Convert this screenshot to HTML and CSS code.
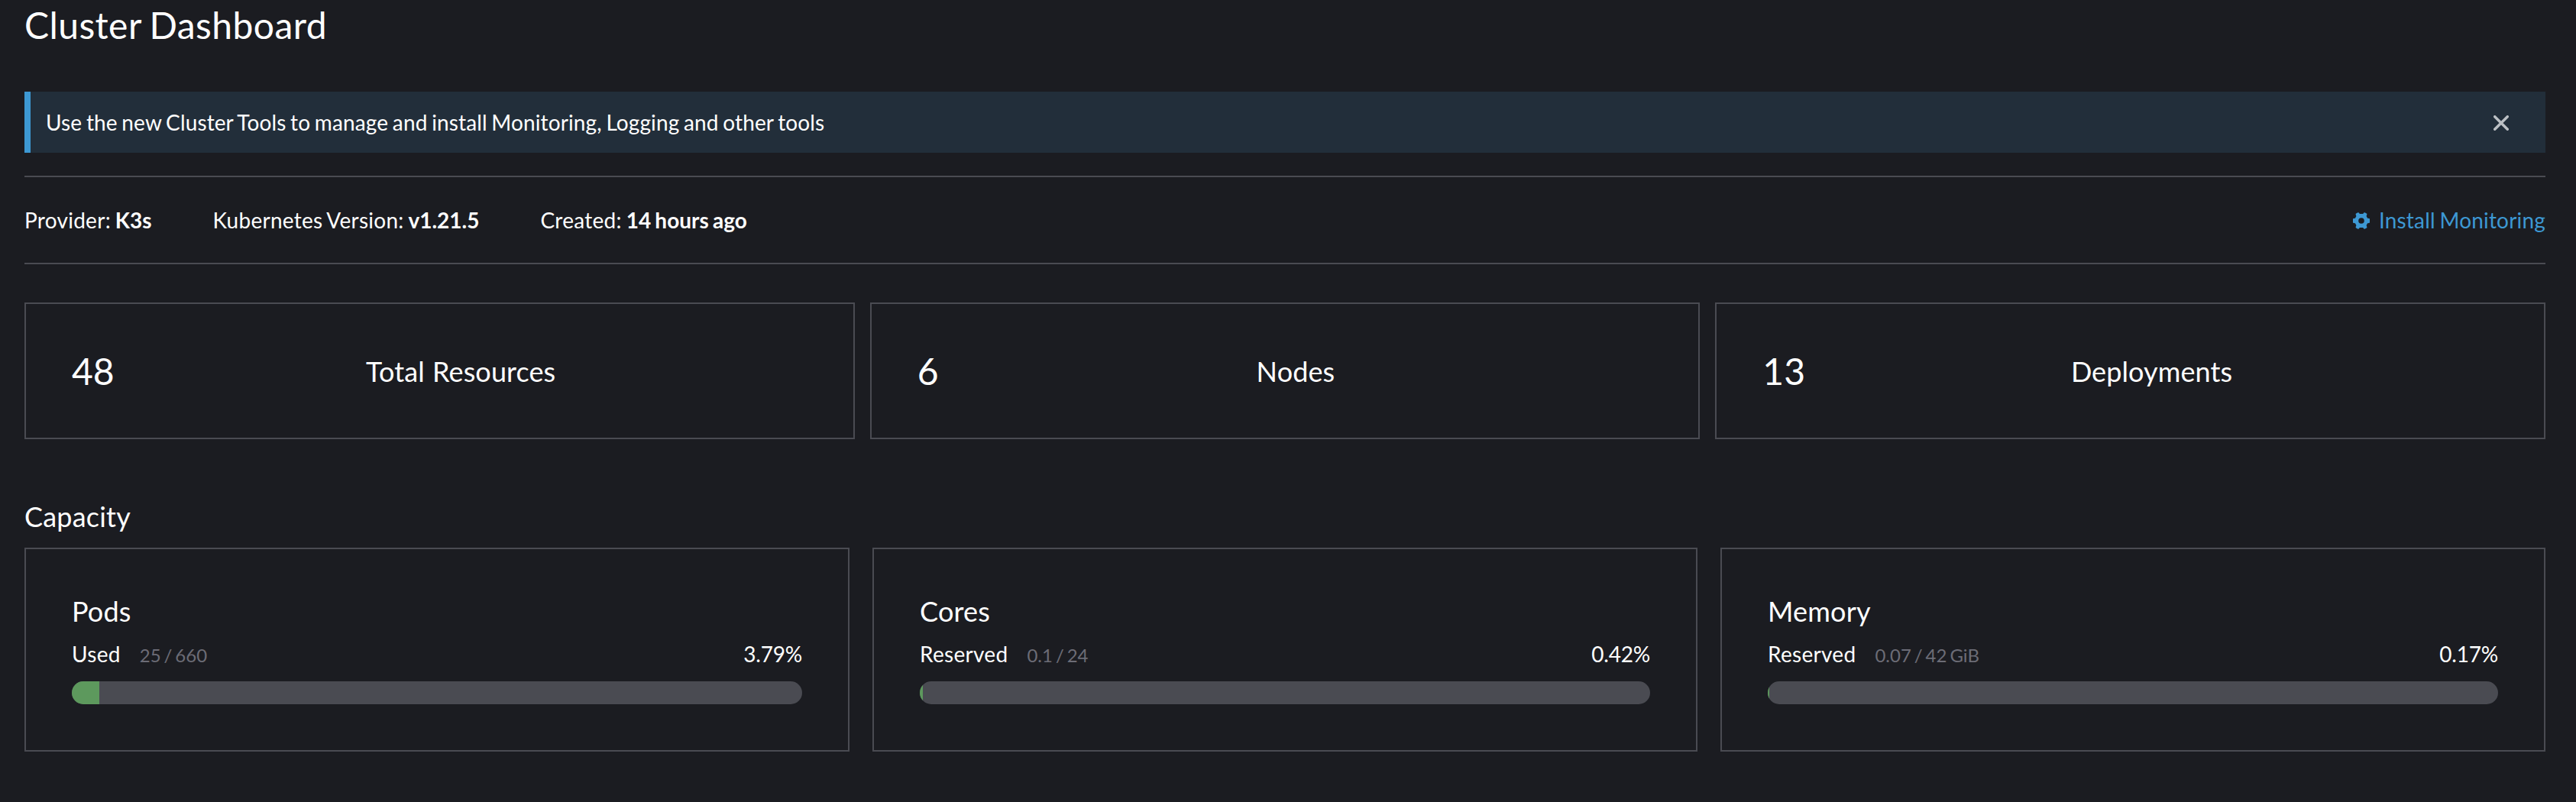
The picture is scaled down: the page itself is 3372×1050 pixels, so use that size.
FILE: index.html
```html
<!DOCTYPE html>
<html lang="en">
<head>
<meta charset="utf-8">
<title>Cluster Dashboard</title>
<link rel="stylesheet" href="styles.css">
</head>
<body>
<main class="dashboard">
  <h1 class="title">Cluster Dashboard</h1>

  <div class="banner">
    <span class="banner-text">Use the new Cluster Tools to manage and install Monitoring, Logging and other tools</span>
    <svg class="close" viewBox="0 0 20 20" role="button" aria-label="Close"><path d="M1.7 1.7 18.3 18.3M18.3 1.7 1.7 18.3"/></svg>
  </div>

  <div class="glance">
    <div>Provider: <b>K3s</b></div>
    <div>Kubernetes Version: <b>v1.21.5</b></div>
    <div>Created: <b>14 hours ago</b></div>
    <a class="monitoring">
      <svg class="gear" viewBox="-11 -11 22 22"><path fill-rule="evenodd" d="M-7.2-9.2-4.6-10.8-3.2-10.6-2.2-9.1H2.2L3.2-10.6 4.6-10.8 7.2-9.2 7.4-8.2 6.6-6 8.1-3.2 10.4-2.9 11-2.3V2.3L10.4 2.9 8.1 3.2 6.6 6 7.4 8.2 7.2 9.2 4.6 10.8 3.2 10.6 2.2 9.1H-2.2L-3.2 10.6-4.6 10.8-7.2 9.2-7.4 8.2-6.6 6-8.1 3.2-10.4 2.9-11 2.3V-2.3L-10.4-2.9-8.1-3.2-6.6-6-7.4-8.2ZM0-3.8A3.8 3.8 0 1 0 0 3.8 3.8 3.8 0 1 0 0-3.8Z"/></svg>
      <span>Install Monitoring</span>
    </a>
  </div>

  <section class="counts">
    <div class="count-card"><span class="count">48</span><span class="label">Total Resources</span></div>
    <div class="count-card"><span class="count">6</span><span class="label">Nodes</span></div>
    <div class="count-card"><span class="count">13</span><span class="label">Deployments</span></div>
  </section>

  <h2 class="heading">Capacity</h2>
  <section class="gauges">
    <div class="gauge">
      <h3 class="heading">Pods</h3>
      <div class="figures"><span class="kind">Used</span><span class="amount">25 / 660</span><span class="percent">3.79%</span></div>
      <div class="bar"><div class="fill" style="width:3.79%"></div></div>
    </div>
    <div class="gauge">
      <h3 class="heading">Cores</h3>
      <div class="figures"><span class="kind">Reserved</span><span class="amount">0.1 / 24</span><span class="percent">0.42%</span></div>
      <div class="bar"><div class="fill" style="width:0.42%"></div></div>
    </div>
    <div class="gauge">
      <h3 class="heading">Memory</h3>
      <div class="figures"><span class="kind">Reserved</span><span class="amount">0.07 / 42 GiB</span><span class="percent">0.17%</span></div>
      <div class="bar"><div class="fill" style="width:0.17%"></div></div>
    </div>
  </section>
</main>
</body>
</html>
```
FILE: styles.css
```css
* {
  box-sizing: border-box;
}

body {
  margin: 0;
  background: #1b1c21;
  color: #fff;
  font: 28px/34px Lato, "Liberation Sans", sans-serif;
}

.dashboard {
  min-height: 1050px;
  padding: 4px 40px 0 32px;
}

h1, h2, h3 {
  margin: 0;
  font-weight: 400;
}

.title {
  font-size: 48px;
  line-height: 57px;
  letter-spacing: 0.42px;
  word-spacing: -2px;
}

.heading {
  font-size: 36px;
  line-height: 44px;
  letter-spacing: 0.2px;
}

.banner {
  display: flex;
  align-items: center;
  justify-content: space-between;
  height: 80px;
  margin-top: 59px;
  padding: 0 48px 0 20px;
  border-left: 8px solid #3d98d3;
  background: #222e3a;
}

.banner-text {
  letter-spacing: 0.12px;
  word-spacing: -1.6px;
}

.close {
  width: 20px;
  height: 20px;
  margin-top: 2px;
  fill: none;
  stroke: #bcc0c4;
  stroke-width: 3.4;
  stroke-linecap: round;
}

.glance {
  display: flex;
  align-items: center;
  gap: 80px;
  height: 116px;
  margin-top: 30px;
  border-top: 2px solid #4a4b52;
  border-bottom: 2px solid #4a4b52;
  letter-spacing: 0.27px;
  word-spacing: -1.6px;
}

.glance b {
  letter-spacing: 0;
}

.monitoring {
  display: flex;
  align-items: center;
  gap: 12px;
  margin-left: auto;
  color: #3d98d3;
  letter-spacing: 0.18px;
}

.gear {
  width: 22px;
  height: 22px;
  margin-top: 2px;
  fill: currentColor;
}

.counts {
  display: grid;
  grid-template-columns: repeat(3, 1fr);
  gap: 20px;
  margin: 50px 0 79px;
}

.count-card {
  display: flex;
  align-items: center;
  height: 179px;
  padding: 0 60px;
  border: 2px solid #4a4b52;
}

.count {
  font-size: 48px;
  line-height: 57px;
}

.label {
  flex: 1;
  padding-top: 1px;
  font-size: 36px;
  line-height: 44px;
  letter-spacing: 0.1px;
  word-spacing: 1px;
  text-align: center;
}

.gauges {
  display: grid;
  grid-template-columns: repeat(3, 1fr);
  gap: 30px;
  margin-top: 19px;
}

.gauge {
  padding: 59px 60px 60px;
  border: 2px solid #4a4b52;
}

.figures {
  display: flex;
  align-items: baseline;
  height: 34px;
  margin: 17px 0 19px;
}

.kind {
  letter-spacing: 0.3px;
}

.amount {
  margin-left: 25px;
  color: #6c6c76;
  font-size: 24px;
  line-height: 29px;
  word-spacing: -2.2px;
}

.percent {
  margin-left: auto;
  letter-spacing: -0.2px;
}

.bar {
  height: 30px;
  overflow: hidden;
  border-radius: 15px;
  background: #4a4b52;
}

.fill {
  height: 100%;
  background: #5d995d;
}
```
